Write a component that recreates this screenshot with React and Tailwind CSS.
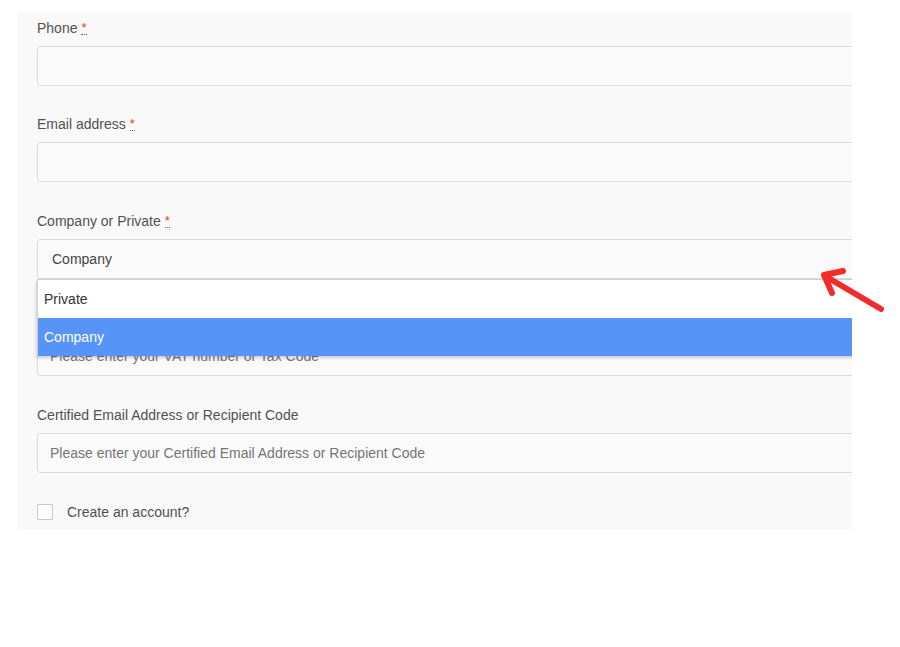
import React from "react";

function Req() {
  return (
    <abbr
      title="required"
      className="ml-1 text-[#e2401c] no-underline border-b border-dotted border-[#e2401c] text-[13px] leading-none"
    >
      *
    </abbr>
  );
}

function Field({ label, req, placeholder, gap, children }) {
  return (
    <div className={gap}>
      <div className="h-5 leading-5 text-[14px] text-[#515151] flex items-center">
        <span>{label}</span>
        {req && <Req />}
      </div>
      <div className="mt-2 relative">
        {children || (
          <div className="h-10 w-[calc(100%+6px)] rounded-[3px] border border-[#dcdcdc] bg-[#fafafa] flex items-center pl-3 text-[14px] text-[#757575]">
            {placeholder}
          </div>
        )}
      </div>
    </div>
  );
}

export default function App() {
  return (
    <div
      className="w-[900px] h-[647px] bg-white relative overflow-hidden"
      style={{ fontFamily: '"Liberation Sans", Arial, sans-serif' }}
    >
      <div className="ml-[17px] mt-[12px] w-[835px] h-[518px] bg-[#f9f9f9] overflow-hidden pl-5 pt-[6px]">
        <Field label="Phone" req gap="" placeholder="" />
        <Field label="Email address" req gap="mt-[28px]" placeholder="" />
        <Field label="Company or Private" req gap="mt-[29px]">
          <div className="h-10 w-[calc(100%+6px)] rounded-[3px] border border-[#dcdcdc] bg-[#fafafa] flex items-center pl-[14px] text-[14px] text-[#444]">
            Company
          </div>
          <div className="absolute left-0 top-[40px] w-[calc(100%+6px)] z-10 border-l border-t border-[#d0d0d0] shadow-[-1px_2px_3px_rgba(0,0,0,0.18)]">
            <div className="h-[38px] bg-white flex items-center pl-[6px] text-[14px] text-[#333]">
              Private
            </div>
            <div className="h-[38px] bg-[#5794f8] flex items-center pl-[6px] text-[14px] text-white">
              Company
            </div>
          </div>
        </Field>
        <Field
          label="VAT number or Tax Code"
          gap="mt-[29px]"
          placeholder="Please enter your VAT number or Tax Code"
        />
        <Field
          label="Certified Email Address or Recipient Code"
          gap="mt-[29px]"
          placeholder="Please enter your Certified Email Address or Recipient Code"
        />
        <div className="mt-[31px] flex items-center h-4">
          <div className="w-4 h-4 border border-[#c8c8c8] bg-white rounded-[1px]" />
          <span className="ml-[14px] text-[14px] text-[#515151]">Create an account?</span>
        </div>
      </div>
      <svg
        className="absolute left-0 top-0 pointer-events-none z-20"
        width="900"
        height="647"
        viewBox="0 0 900 647"
      >
        <g stroke="#f22b2b" strokeWidth="6" strokeLinecap="round" strokeLinejoin="round" fill="none">
          <line x1="825" y1="276" x2="881" y2="309" />
          <polyline points="843,271 824,275 832,293" />
        </g>
      </svg>
    </div>
  );
}
